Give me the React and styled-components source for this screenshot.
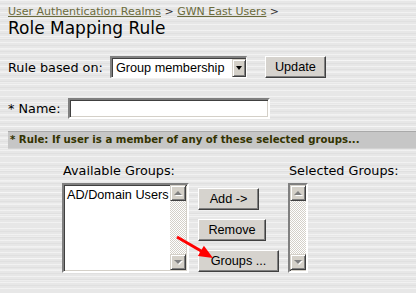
import React from 'react'
import styled, { createGlobalStyle } from 'styled-components'

const GlobalStyle = createGlobalStyle`
  html, body { margin: 0; padding: 0; }
  body { font-family: "DejaVu Sans", Verdana, sans-serif; }
`

const Page = styled.div`
  position: relative;
  width: 416px;
  height: 293px;
  overflow: hidden;
  box-sizing: border-box;
  padding: 6px 0 0 8px;
  color: #000;
  background-color: #e7e7e7;
  background-image:
    repeating-linear-gradient(180deg, rgba(255,255,255,.45) 0 1px, transparent 1px 3px, rgba(0,0,0,.03) 3px 4px, transparent 4px 6px),
    repeating-linear-gradient(180deg, transparent 0 5px, rgba(255,255,255,.3) 5px 6px, transparent 6px 11px);
`

const Breadcrumb = styled.div`
  font-size: 11px;
  line-height: 12px;
  color: #333;
`

const Crumb = styled.a`
  color: #6b6b3c;
  text-decoration: underline;
`

const Title = styled.h1`
  margin: 0;
  font-size: 17px;
  line-height: 20px;
  font-weight: normal;
`

const FormRow = styled.div`
  display: flex;
  align-items: center;
  margin-top: ${p => p.$top}px;
`

const Label = styled.span`
  font-size: 12.8px;
  margin-right: ${p => p.$gap}px;
  white-space: nowrap;
`

const controlFont = `font-family: "Liberation Sans", Arial, sans-serif; font-size: 12.7px;`

const Select = styled.div`
  ${controlFont}
  box-sizing: border-box;
  width: 137px;
  height: 22px;
  display: flex;
  align-items: center;
  background: #fff;
  border-style: solid;
  border-width: 2px 1px 1px 2px;
  border-color: #808080 #fff #fff #808080;
  box-shadow: inset 1px 1px #404040;
`

const SelectValue = styled.span`
  flex: 1;
  padding-left: 4px;
  white-space: nowrap;
`

const DropButton = styled.span`
  box-sizing: border-box;
  width: 14px;
  height: 18px;
  background: #d4d0c8;
  border: 1px solid;
  border-color: #d4d0c8 #404040 #404040 #d4d0c8;
  box-shadow: inset 1px 1px #fff, inset -1px -1px #808080;
  display: flex;
  align-items: center;
  justify-content: center;
  &::after {
    content: '';
    border-left: 3.5px solid transparent;
    border-right: 3.5px solid transparent;
    border-top: 4px solid #000;
  }
`

const Button = styled.button`
  ${controlFont}
  box-sizing: border-box;
  width: ${p => p.$w}px;
  height: 22px;
  padding: 0;
  margin-left: ${p => p.$left || 0}px;
  color: #000;
  background: #d6d3ce;
  border: 1px solid;
  border-color: #fff #404040 #404040 #fff;
  box-shadow: inset -1px -1px #808080;
  text-align: center;
  cursor: pointer;
`

const TextInput = styled.input`
  ${controlFont}
  box-sizing: border-box;
  width: 202px;
  height: 21px;
  padding: 0 3px;
  background: #fff;
  border: 2px solid;
  border-color: #808080 #fff #fff #808080;
  box-shadow: inset 1px 1px #404040, inset -1px -1px #d4d0c8;
  outline: none;
`

const RuleBar = styled.div`
  margin-top: 12px;
  height: 18px;
  box-sizing: border-box;
  padding-left: 2px;
  background: #c6c6c6;
  border-top: 1px solid #a9a9a9;
  border-bottom: 1px solid #d2d2d2;
  font-family: "DejaVu Sans Condensed", "DejaVu Sans", sans-serif;
  font-weight: bold;
  font-size: 11.3px;
  line-height: 16px;
  color: #333300;
  white-space: nowrap;
`

const GroupsGrid = styled.div`
  display: grid;
  grid-template-columns: 127px 81px 20px;
  column-gap: 9px;
  row-gap: 4px;
  padding: 14px 0 0 54px;
`

const ColumnLabel = styled.div`
  font-size: 12.8px;
  line-height: 16px;
  padding-left: 1px;
  white-space: nowrap;
`

const ListBox = styled.div`
  box-sizing: border-box;
  height: 90px;
  display: flex;
  background: #fff;
  border: 2px solid;
  border-color: #808080 #fff #fff #808080;
  box-shadow: inset 1px 1px #404040, inset -1px -1px #d4d0c8;
  padding: 0 1px 1px 0;
`

const ListItems = styled.div`
  ${controlFont}
  flex: 1;
  padding: 3px 0 0 3px;
  line-height: 15px;
`

const Scrollbar = styled.div`
  width: 16px;
  display: flex;
  flex-direction: column;
`

const ScrollTrack = styled.div`
  flex: 1;
  background-color: #fff;
  background-image: conic-gradient(#d4d0c8 25%, transparent 0 50%, #d4d0c8 0 75%, transparent 0);
  background-size: 2px 2px;
`

const ScrollArrow = styled.div`
  box-sizing: border-box;
  width: 16px;
  height: 16px;
  background: #d4d0c8;
  border: 1px solid;
  border-color: #d4d0c8 #404040 #404040 #d4d0c8;
  box-shadow: inset 1px 1px #fff, inset -1px -1px #808080;
  display: flex;
  align-items: center;
  justify-content: center;
  &::after {
    content: '';
    border-left: 4px solid transparent;
    border-right: 4px solid transparent;
    ${p => (p.$dir === 'up' ? 'border-bottom' : 'border-top')}: 4px solid #808080;
    filter: drop-shadow(1px 1px 0 #fff);
  }
`

const ButtonStack = styled.div`
  display: flex;
  flex-direction: column;
  align-items: flex-start;
  gap: 9px;
  padding-top: 5px;
`

const Arrow = styled.svg`
  position: absolute;
  left: 0;
  top: 0;
  pointer-events: none;
`

const ScrollBar = () => (
  <Scrollbar>
    <ScrollArrow $dir="up" />
    <ScrollTrack />
    <ScrollArrow $dir="down" />
  </Scrollbar>
)

export default function App() {
  return (
    <Page>
      <GlobalStyle />
      <Breadcrumb>
        <Crumb>User Authentication Realms</Crumb> &gt; <Crumb>GWN East Users</Crumb> &gt;
      </Breadcrumb>
      <Title>Role Mapping Rule</Title>

      <FormRow $top={18}>
        <Label $gap={7}>Rule based on:</Label>
        <Select>
          <SelectValue>Group membership</SelectValue>
          <DropButton />
        </Select>
        <Button $w={61} $left={18}>Update</Button>
      </FormRow>

      <FormRow $top={20}>
        <Label $gap={7}>* Name:</Label>
        <TextInput />
      </FormRow>

      <RuleBar>* Rule: If user is a member of any of these selected groups...</RuleBar>

      <GroupsGrid>
        <ColumnLabel>Available Groups:</ColumnLabel>
        <div />
        <ColumnLabel>Selected Groups:</ColumnLabel>

        <ListBox>
          <ListItems>AD/Domain Users</ListItems>
          <ScrollBar />
        </ListBox>
        <ButtonStack>
          <Button $w={61}>Add -&gt;</Button>
          <Button $w={68}>Remove</Button>
          <Button $w={81}>Groups ...</Button>
        </ButtonStack>
        <ListBox>
          <ScrollBar />
        </ListBox>
      </GroupsGrid>

      <Arrow width="416" height="293" viewBox="0 0 416 293">
        <line x1="177" y1="237" x2="202" y2="251.5" stroke="#ff0000" strokeWidth="3" />
        <polygon points="213,258 197.9,256.1 203.9,245.7" fill="#ff0000" />
      </Arrow>
    </Page>
  )
}
